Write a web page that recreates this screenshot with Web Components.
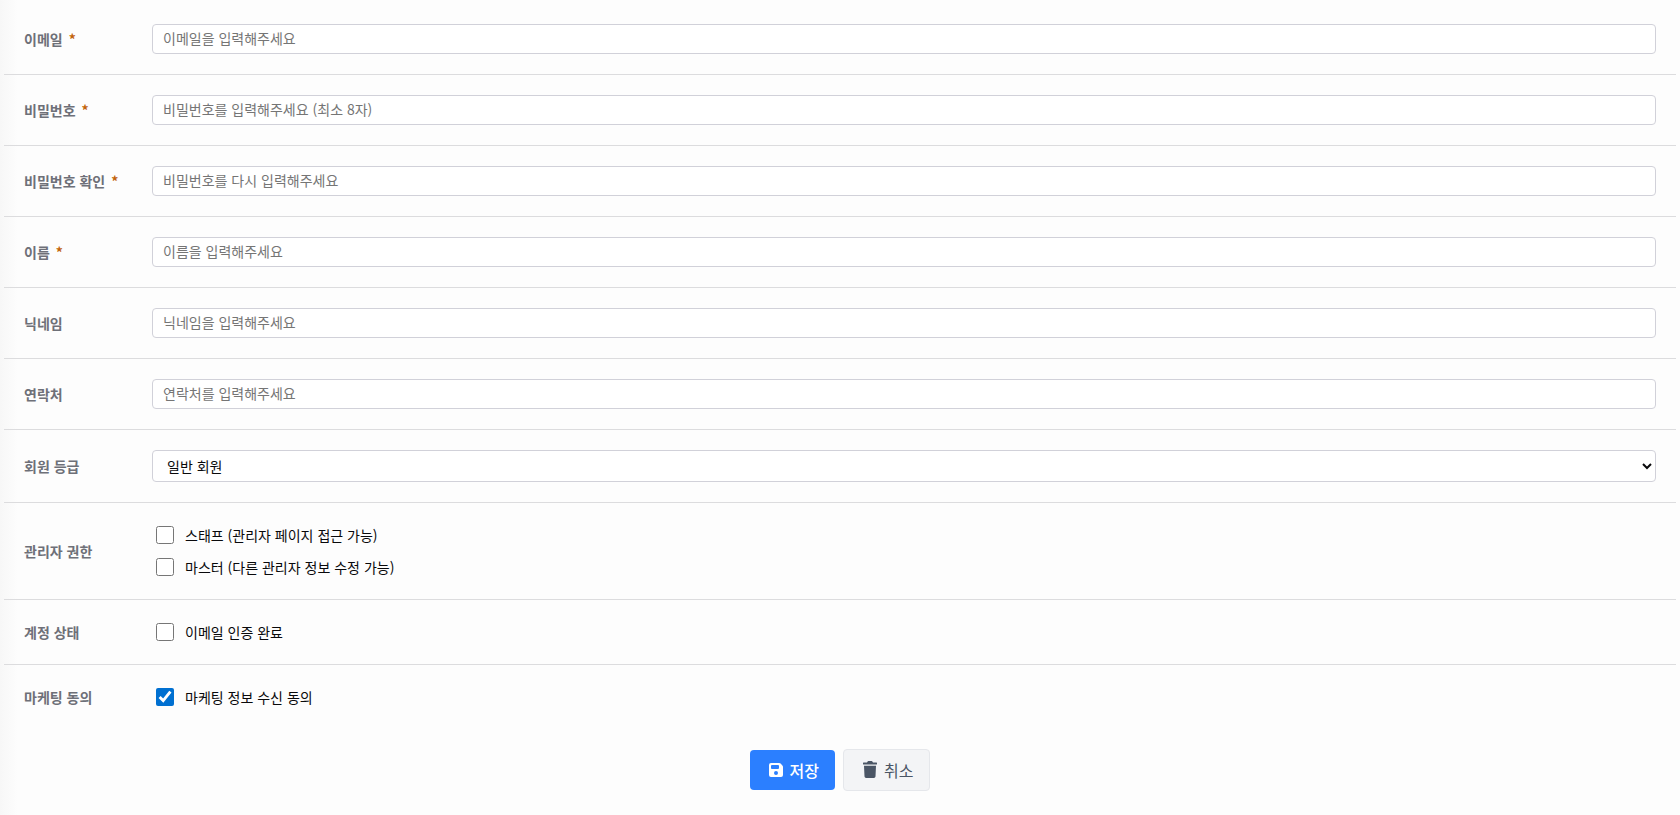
<!DOCTYPE html>
<html lang="ko">
<head>
  <meta charset="UTF-8">
  <meta name="viewport" content="width=device-width, initial-scale=1.0">
  <title>회원 등록</title>
  <style>
    body {
      --line-color: #dcdcde;
      --field-border: #d1d1d9;
      --label-color: #6e7078;
      --required-color: #c2630a;
      margin: 0;
      min-height: 100vh;
      background: linear-gradient(to right, #f7f7f7, #fdfdfd 18px);
      color: #09090b;
      font-family: "Noto Sans CJK KR", sans-serif;
      font-size: 14px;
    }
  </style>
</head>
<body>
  <member-form></member-form>

  <script>
    /**
     * A labelled row with one text box
     * Attributes: label, placeholder, type, required
     */
    class TextField extends HTMLElement {
      constructor() {
        super();
        this.shadow = this.attachShadow({ mode: 'open' });
      }

      connectedCallback() {
        this.render();
      }

      render() {
        const type = this.getAttribute('type') || 'text';
        const mark = this.hasAttribute('required') ? '<span class="mark">*</span>' : '';
        this.shadow.innerHTML = `
          <style>
            ${ rowStyle }
            input {
              box-sizing: border-box;
              display: block;
              width: 100%;
              height: 30px;
              margin: 0;
              padding: 0 10px 2px;
              border: 1px solid var(--field-border);
              border-radius: 4px;
              background: #fff;
              font: inherit;
            }
            input::placeholder { color: #757575 }
          </style>
          <label class="title" for="field">${ this.getAttribute('label') }${ mark }</label>
          <input id="field" type="${ type }" placeholder="${ this.getAttribute('placeholder') }">
        `;
      }
    }

    class SelectField extends HTMLElement {
      constructor() {
        super();
        this.shadow = this.attachShadow({ mode: 'open' });
      }

      connectedCallback() {
        this.render();
      }

      render() {
        const options = this.getAttribute('options').split(',');
        this.shadow.innerHTML = `
          <style>
            ${ rowStyle }
            select {
              box-sizing: border-box;
              display: block;
              width: 100%;
              height: 32px;
              margin: 0;
              padding: 0 0 0 10px;
              border: 1px solid var(--field-border);
              border-radius: 4px;
              background: #fff;
              color: inherit;
              font: inherit;
            }
          </style>
          <label class="title" for="field">${ this.getAttribute('label') }</label>
          <select id="field">
            ${ options.map((option) => `<option>${ option }</option>`).join('') }
          </select>
        `;
      }
    }

    /**
     * A labelled row that stacks the check-option elements slotted into it
     */
    class OptionField extends HTMLElement {
      constructor() {
        super();
        this.shadow = this.attachShadow({ mode: 'open' });
      }

      connectedCallback() {
        this.shadow.innerHTML = `
          <style>
            ${ rowStyle }
            .options {
              display: grid;
              gap: 8px;
            }
          </style>
          <span class="title" id="title">${ this.getAttribute('label') }</span>
          <div class="options" role="group" aria-labelledby="title"><slot></slot></div>
        `;
      }
    }

    class CheckOption extends HTMLElement {
      constructor() {
        super();
        this.shadow = this.attachShadow({ mode: 'open' });
      }

      connectedCallback() {
        this.shadow.innerHTML = `
          <style>
            :host { display: block }
            label {
              display: flex;
              align-items: center;
              width: fit-content;
              height: 24px;
              gap: 11px;
            }
            input {
              width: 18px;
              height: 18px;
              margin: 0 0 0 4px;
              accent-color: #0070d1;
            }
          </style>
          <label>
            <input type="checkbox" ${ this.hasAttribute('checked') ? 'checked' : '' }>
            <span><slot></slot></span>
          </label>
        `;
      }
    }

    class ActionButton extends HTMLElement {
      constructor() {
        super();
        this.shadow = this.attachShadow({ mode: 'open' });
      }

      connectedCallback() {
        const kind = this.getAttribute('kind');
        this.shadow.innerHTML = `
          <style>
            :host { display: block }
            button {
              display: flex;
              align-items: center;
              gap: 4px;
              height: 40px;
              margin: 0;
              padding: 0 16px;
              border: 0;
              border-radius: 4px;
              font: inherit;
              font-size: 16px;
              cursor: pointer;
            }
            .save {
              background: #2b7fff;
              color: #fff;
              font-weight: 500;
            }
            .cancel {
              box-sizing: border-box;
              height: 42px;
              border: 1px solid #e5e7eb;
              background: #f3f4f6;
              color: #4a5565;
            }
            svg {
              width: 20px;
              height: 20px;
              fill: currentColor;
            }
          </style>
          <button type="button" class="${ kind }">
            <svg viewBox="0 0 20 20" aria-hidden="true">${ icons[kind] }</svg>
            <span><slot></slot></span>
          </button>
        `;
      }
    }

    class MemberForm extends HTMLElement {
      constructor() {
        super();
        this.shadow = this.attachShadow({ mode: 'open' });
      }

      connectedCallback() {
        this.shadow.innerHTML = `
          <style>
            :host {
              display: block;
              padding: 4px;
            }
            form { margin: 0 }
            .actions {
              display: flex;
              align-items: center;
              justify-content: center;
              gap: 8px;
              padding: 20px;
            }
            option-field:last-of-type { border-bottom: 0 }
          </style>
          <form>
            <text-field label="이메일" type="email" placeholder="이메일을 입력해주세요" required></text-field>
            <text-field label="비밀번호" type="password" placeholder="비밀번호를 입력해주세요 (최소 8자)" required></text-field>
            <text-field label="비밀번호 확인" type="password" placeholder="비밀번호를 다시 입력해주세요" required></text-field>
            <text-field label="이름" placeholder="이름을 입력해주세요" required></text-field>
            <text-field label="닉네임" placeholder="닉네임을 입력해주세요"></text-field>
            <text-field label="연락처" type="tel" placeholder="연락처를 입력해주세요"></text-field>
            <select-field label="회원 등급" options="일반 회원"></select-field>
            <option-field label="관리자 권한">
              <check-option>스태프 (관리자 페이지 접근 가능)</check-option>
              <check-option>마스터 (다른 관리자 정보 수정 가능)</check-option>
            </option-field>
            <option-field label="계정 상태">
              <check-option>이메일 인증 완료</check-option>
            </option-field>
            <option-field label="마케팅 동의">
              <check-option checked>마케팅 정보 수신 동의</check-option>
            </option-field>
            <div class="actions">
              <action-button kind="save">저장</action-button>
              <action-button kind="cancel">취소</action-button>
            </div>
          </form>
        `;
      }
    }

    // Shared by every row of the form
    const rowStyle = `
      :host {
        display: grid;
        grid-template-columns: 128px 1fr;
        align-items: center;
        padding: 20px;
        border-bottom: 1px solid var(--line-color);
      }
      .title {
        color: var(--label-color);
        font-weight: 700;
        line-height: 20px;
      }
      .mark {
        margin-left: 6px;
        color: var(--required-color);
      }
    `;

    const icons = {
      save: `<path fill-rule="evenodd" d="M5 3h8.2a2 2 0 0 1 1.4.6l1.8 1.8a2 2 0 0 1 .6 1.4V15a2 2 0 0 1-2 2H5a2 2 0 0 1-2-2V5a2 2 0 0 1 2-2zm1 2a1 1 0 0 0-1 1v2a1 1 0 0 0 1 1h6a1 1 0 0 0 1-1V6a1 1 0 0 0-1-1zm4 6a2 2 0 1 0 0 4 2 2 0 0 0 0-4z"/>`,
      cancel: `<path d="M3.5 2.5H7l.6-1a1 1 0 0 1 .8-.5h3.2a1 1 0 0 1 .8.5l.6 1h3.5a.5.5 0 0 1 .5.5v1a.5.5 0 0 1-.5.5h-13A.5.5 0 0 1 3 4V3a.5.5 0 0 1 .5-.5zM4 5.8h12l-.5 10.8A1.6 1.6 0 0 1 13.9 18H6.100a1.600 1.600 0 0 1-1.600-1.400z"/>`
    };

    customElements.define('text-field', TextField);
    customElements.define('select-field', SelectField);
    customElements.define('option-field', OptionField);
    customElements.define('check-option', CheckOption);
    customElements.define('action-button', ActionButton);
    customElements.define('member-form', MemberForm);
  </script>
</body>
</html>
